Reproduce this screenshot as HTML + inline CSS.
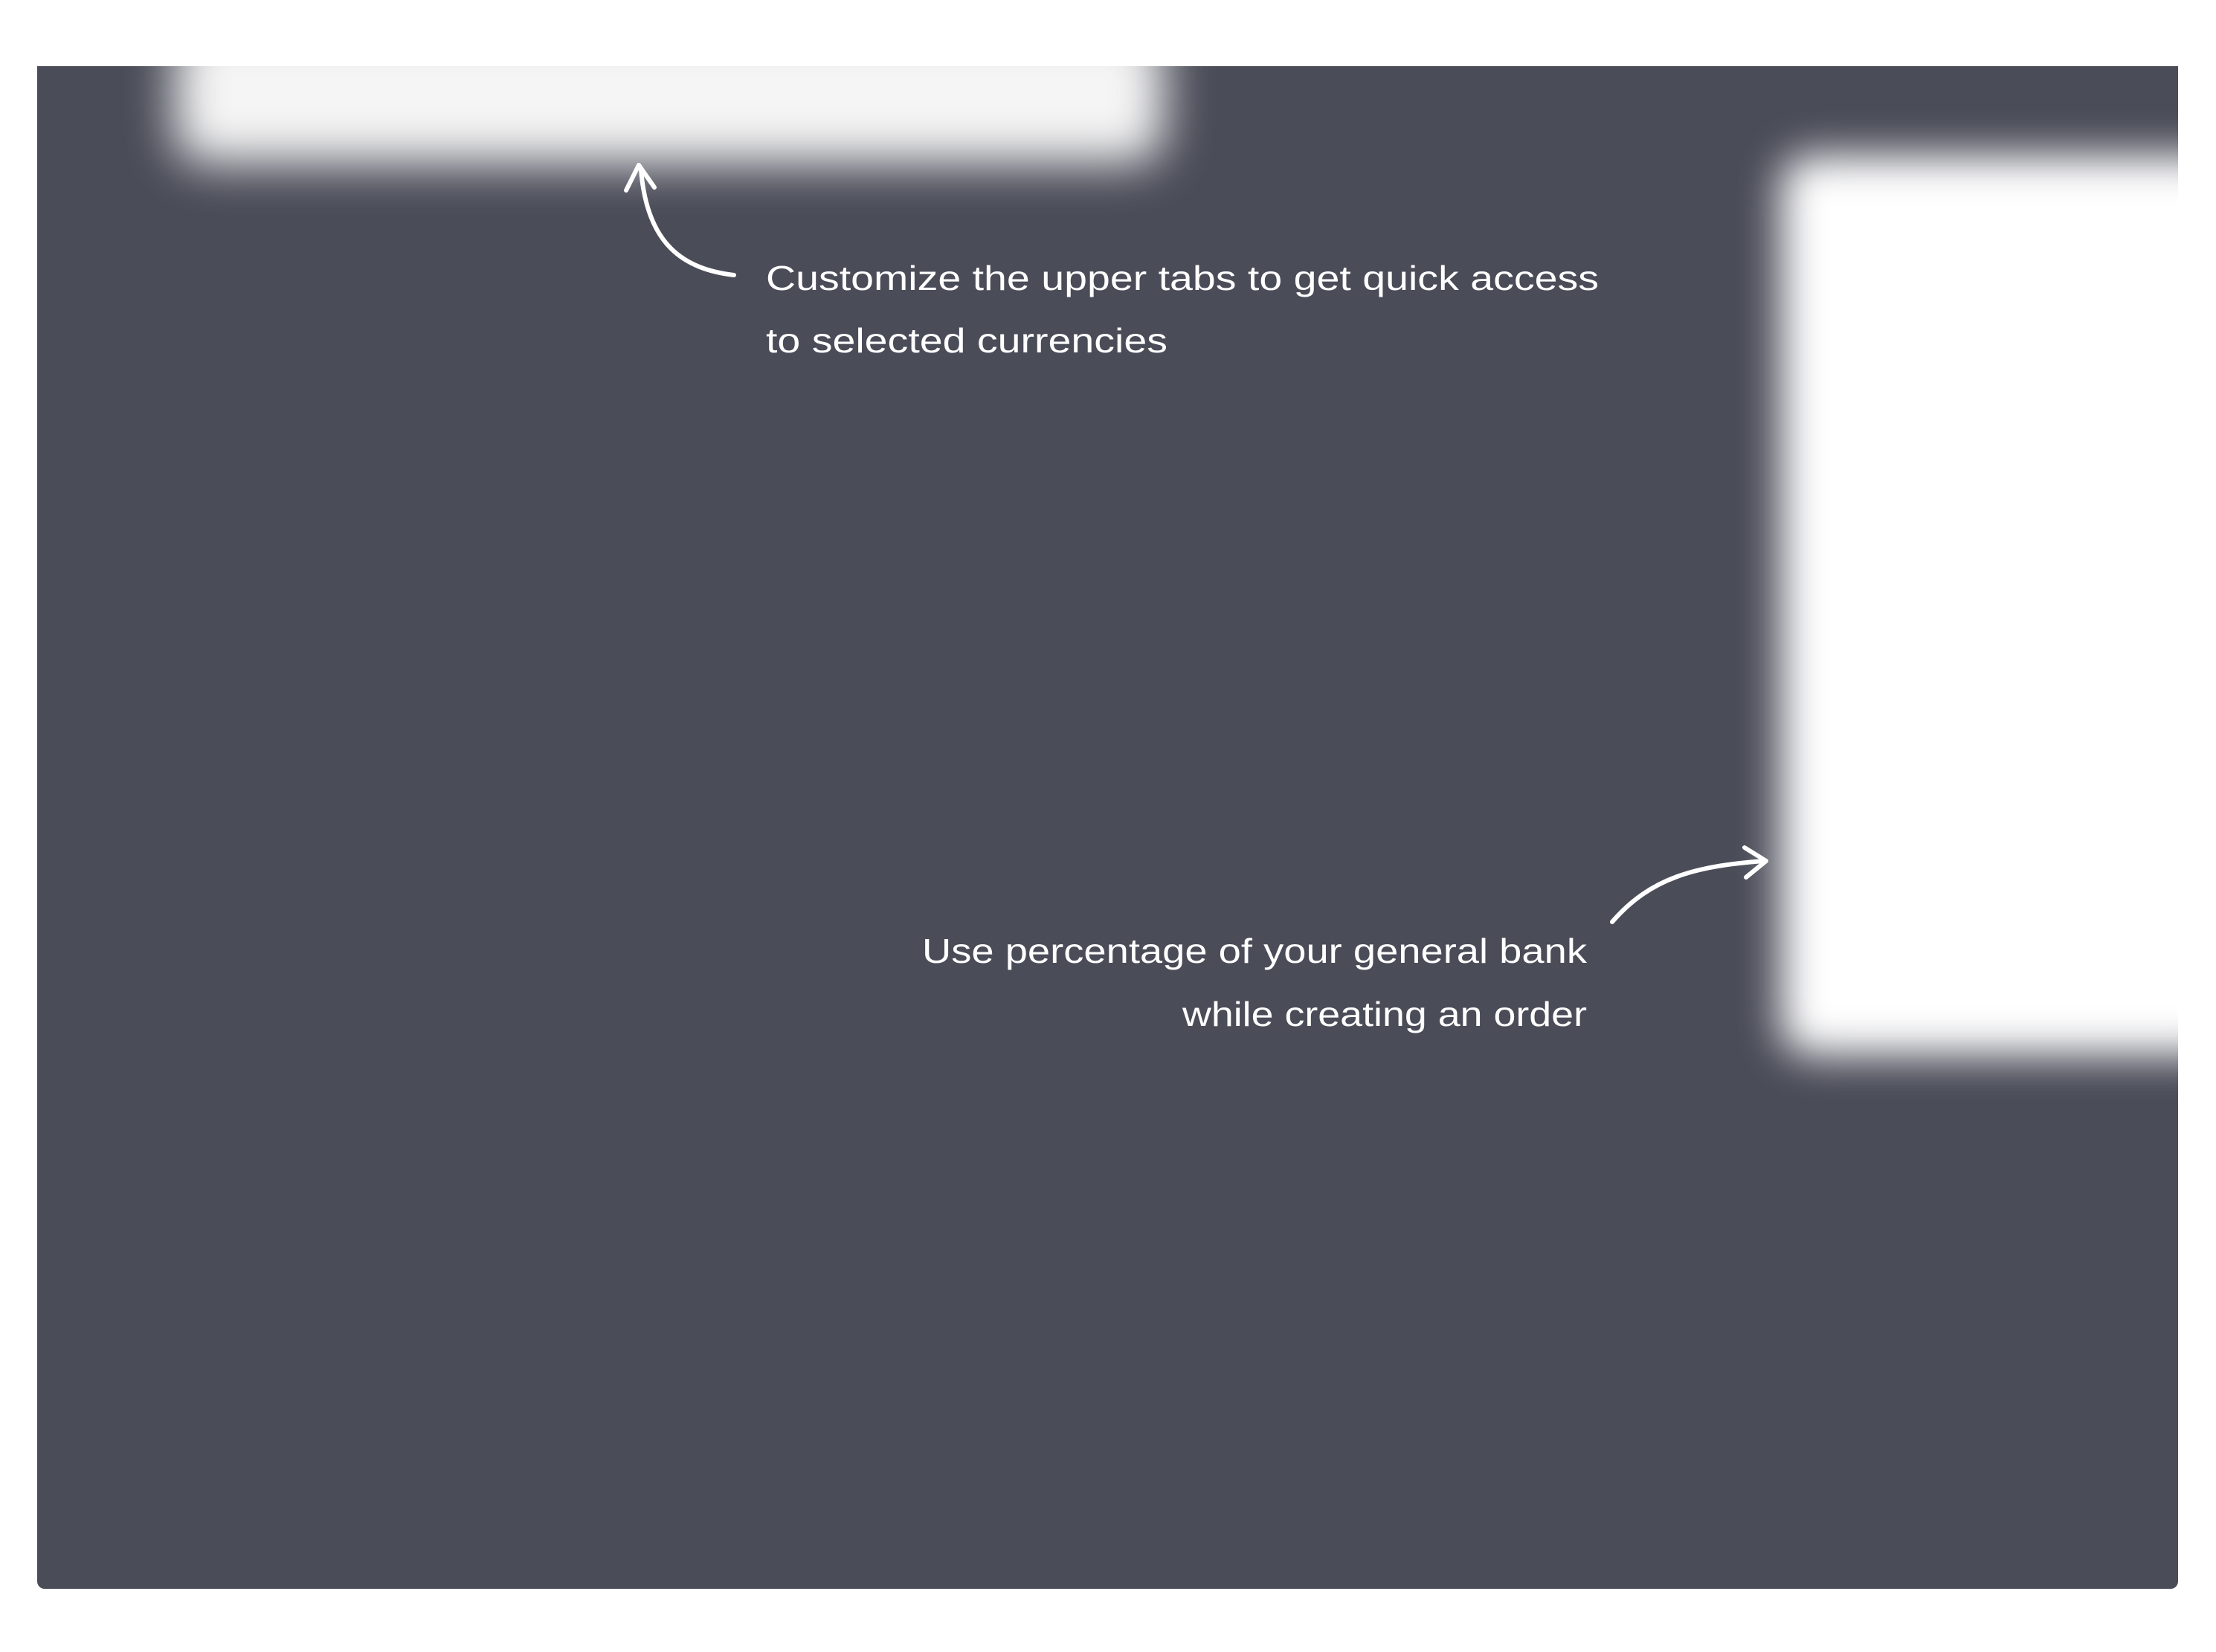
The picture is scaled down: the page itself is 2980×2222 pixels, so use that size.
<!DOCTYPE html>
<html><head><meta charset="utf-8"><style>
html,body{margin:0;padding:0;background:#fff;}
body{width:2980px;height:2222px;position:relative;overflow:hidden;}
#panel{position:absolute;left:50px;top:89px;width:2879px;height:2048px;background:#4a4c58;border-radius:0 0 10px 10px;overflow:hidden;}
.b{position:absolute;background:#f6f6f6;border-radius:40px;}
svg{position:absolute;left:0;top:0;}
text{font-family:"Liberation Sans",sans-serif;fill:#fff;font-size:46px;}
</style></head><body>
<div id="panel">
  <div class="b" style="left:185px;top:-60px;width:1330px;height:190px;background:#f5f5f5;filter:blur(32px)"></div>
  <div class="b" style="left:2345px;top:120px;width:620px;height:1210px;background:#fff;filter:blur(28px)"></div>
</div>
<svg width="2980" height="2222" viewBox="0 0 2980 2222">
  <g fill="none" stroke="#fff" stroke-width="6" stroke-linecap="round" stroke-linejoin="round">
    <path d="M987 370 C920 362 870 330 862 228"/>
    <path d="M842 256 L859 222 L880 252"/>
    <path d="M2168 1240 C2220 1180 2280 1165 2372 1158"/>
    <path d="M2346 1140 L2375 1158 L2348 1180"/>
  </g>
  <text x="1030" y="390" textLength="1120" lengthAdjust="spacingAndGlyphs">Customize the upper tabs to get quick access</text>
  <text x="1030" y="474" textLength="540" lengthAdjust="spacingAndGlyphs">to selected currencies</text>
  <text x="1240" y="1295" textLength="894" lengthAdjust="spacingAndGlyphs">Use percentage of your general bank</text>
  <text x="1590" y="1380" textLength="544" lengthAdjust="spacingAndGlyphs">while creating an order</text>
</svg>
</body></html>
